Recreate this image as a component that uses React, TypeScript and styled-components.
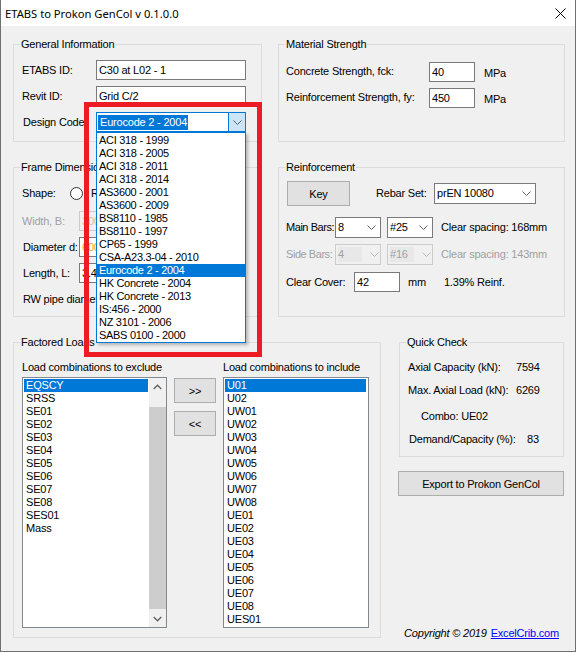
import React from 'react';
import styled, { createGlobalStyle } from 'styled-components';

const GlobalStyle = createGlobalStyle`
  html, body { margin: 0; padding: 0; background: #ffffff; }
  body { font-family: "Liberation Sans", Arial, sans-serif; font-size: 11px; letter-spacing: -0.2px; color: #000; }
  * { box-sizing: border-box; }
`;

const Window = styled.div`
  position: relative;
  width: 576px;
  height: 652px;
  border: 1px solid #707070;
  border-top: none;
  background: #f0f0f0;
  display: flex;
  flex-direction: column;
  overflow: hidden;
`;

const TitleBar = styled.div`
  height: 26px;
  flex: none;
  background: #ffffff;
  display: flex;
  align-items: center;
  justify-content: space-between;
  padding: 0 9px 0 4px;
  font-family: "Noto Sans", "Open Sans", sans-serif;
  font-size: 11.2px;
  letter-spacing: 0;
`;

const CloseIcon = () => (
  <svg width="11" height="11" viewBox="0 0 11 11">
    <path d="M0.5 0.5 L10.5 10.5 M10.5 0.5 L0.5 10.5" stroke="#000" strokeWidth="1" fill="none" />
  </svg>
);

const Body = styled.div`
  flex: 1;
  padding: 18px 0 0 12px;
  display: flex;
  flex-direction: column;
`;

const Row = styled.div<{ $cols: string; $gap: number; $mt?: number }>`
  display: grid;
  grid-template-columns: ${p => p.$cols};
  column-gap: ${p => p.$gap}px;
  margin-top: ${p => p.$mt ?? 0}px;
  align-items: start;
`;

const Group = styled.div<{ $h: number; $pt: number; $pl: number; $ml?: number }>`
  position: relative;
  height: ${p => p.$h}px;
  border: 1px solid #dcdcdc;
  padding: ${p => p.$pt}px 0 0 ${p => p.$pl}px;
  margin-left: ${p => p.$ml ?? 0}px;
`;

const Legend = styled.span`
  position: absolute;
  top: -7px;
  left: 6px;
  padding: 0 1px;
  line-height: 13px;
  background: #f0f0f0;
  white-space: nowrap;
`;

const FieldRow = styled.div<{ $h?: number; $mt?: number; $pl?: number }>`
  display: flex;
  align-items: center;
  height: ${p => p.$h ?? 20}px;
  margin-top: ${p => p.$mt ?? 0}px;
  padding-left: ${p => p.$pl ?? 0}px;
  white-space: nowrap;
`;

const Label = styled.span<{ $w?: number; $disabled?: boolean; $ml?: number; $up?: number; $down?: number; $tight?: boolean }>`
  flex: none;
  width: ${p => (p.$w ? `${p.$w}px` : 'auto')};
  margin-left: ${p => p.$ml ?? 0}px;
  margin-bottom: ${p => (p.$up ?? 0) * 2}px;
  margin-top: ${p => (p.$down ?? 0) * 2}px;
  color: ${p => (p.$disabled ? '#a0a0a0' : '#000000')};
  letter-spacing: ${p => (p.$tight ? '-0.45px' : 'inherit')};
  line-height: 13px;
  white-space: nowrap;
`;

const TextBox = styled.input<{ $w: number; $disabled?: boolean; $color?: string }>`
  flex: none;
  width: ${p => p.$w}px;
  height: 20px;
  margin: 0;
  padding: 0 0 0 2px;
  border: 1px solid ${p => (p.$disabled ? '#cccccc' : '#7a7a7a')};
  background: ${p => (p.$disabled ? '#f0f0f0' : '#ffffff')};
  color: ${p => p.$color ?? '#000000'};
  font: inherit;
  letter-spacing: inherit;
  outline: none;
`;

const Chevron = ({ color = '#606060' }: { color?: string }) => (
  <svg width="9" height="5" viewBox="0 0 9 5">
    <path d="M0.5 0.5 L4.5 4.5 L8.5 0.5" stroke={color} strokeWidth="1" fill="none" />
  </svg>
);

const Combo = styled.div<{ $w: number; $h?: number; $disabled?: boolean; $ml?: number }>`
  flex: none;
  width: ${p => p.$w}px;
  height: ${p => p.$h ?? 21}px;
  margin-left: ${p => p.$ml ?? 0}px;
  border: 1px solid ${p => (p.$disabled ? '#cccccc' : '#7a7a7a')};
  background: ${p => (p.$disabled ? '#f0f0f0' : '#ffffff')};
  display: flex;
  align-items: center;
  padding-left: 2px;
  color: ${p => (p.$disabled ? '#a0a0a0' : '#000000')};
`;

const ComboText = styled.span<{ $disabled?: boolean }>`
  flex: 1;
  line-height: 15px;
  ${p => (p.$disabled ? 'background: #e8e8e8; flex: none; width: 24px; margin-right: 4px;' : '')}
`;

const ComboArrow = styled.span`
  flex: none;
  width: 17px;
  display: flex;
  justify-content: center;
  align-items: center;
`;

const FocusCombo = styled.div`
  position: relative;
  flex: none;
  width: 150px;
  height: 20px;
  margin-left: -1px;
  border: 1px solid #0078d7;
  background: #ffffff;
  display: flex;
  align-items: center;
  padding-left: 1px;
`;

const Selected = styled.span`
  flex: none;
  background: #0078d7;
  color: #ffffff;
  line-height: 15px;
  padding: 0 1px 0 2px;
`;

const FocusArrow = styled.span`
  margin-left: auto;
  width: 17px;
  height: 100%;
  background: #cce4f7;
  border-left: 1px solid #0078d7;
  display: flex;
  align-items: center;
  justify-content: center;
`;

const Popup = styled.div`
  position: absolute;
  top: 19px;
  left: -1px;
  width: 150px;
  z-index: 10;
  background: #ffffff;
  border: 1px solid #0078d7;
  padding-top: 1px;
  box-shadow: 2px 2px 3px rgba(0, 0, 0, 0.25);
  display: flex;
  flex-direction: column;
`;

const PopupItem = styled.div<{ $sel?: boolean }>`
  height: 13px;
  line-height: 13px;
  padding-left: 2px;
  letter-spacing: -0.3px;
  background: ${p => (p.$sel ? '#0078d7' : 'transparent')};
  color: ${p => (p.$sel ? '#ffffff' : '#000000')};
  white-space: nowrap;
`;

const Annotation = styled.div`
  position: absolute;
  left: 83px;
  top: 102px;
  width: 178px;
  height: 255px;
  border: 5px solid #ed1c24;
  z-index: 20;
  pointer-events: none;
`;

const Radio = styled.span<{ $ml?: number }>`
  flex: none;
  width: 13px;
  height: 13px;
  margin-left: ${p => p.$ml ?? 0}px;
  border-radius: 50%;
  border: 1px solid #333333;
  background: #ffffff;
`;

const Button = styled.div<{ $w?: number; $h?: number; $ml?: number }>`
  flex: none;
  width: ${p => (p.$w ? `${p.$w}px` : '100%')};
  height: ${p => p.$h ?? 25}px;
  margin-left: ${p => p.$ml ?? 0}px;
  background: #e1e1e1;
  border: 1px solid #adadad;
  display: flex;
  align-items: center;
  justify-content: center;
  white-space: nowrap;
`;

const LoadsGrid = styled.div`
  display: grid;
  grid-template-columns: 145px 42px 146px;
  grid-template-rows: 13px 251px;
  column-gap: 7px;
  row-gap: 3px;
`;

const ListBox = styled.div<{ $pr?: number }>`
  height: 251px;
  border: 1px solid #828790;
  background: #ffffff;
  display: flex;
  padding: 1px ${p => p.$pr ?? 0}px 0 1px;
`;

const ListItems = styled.div<{ $mr?: number }>`
  flex: 1;
  display: flex;
  flex-direction: column;
  margin-right: ${p => p.$mr ?? 0}px;
`;

const ListItem = styled.div<{ $sel?: boolean }>`
  height: 13px;
  line-height: 13px;
  padding-left: 2px;
  background: ${p => (p.$sel ? '#0078d7' : 'transparent')};
  color: ${p => (p.$sel ? '#ffffff' : '#000000')};
`;

const ScrollBar = styled.div`
  flex: none;
  width: 17px;
  margin-top: -1px;
  height: 249px;
  background: #f0f0f0;
  display: flex;
  flex-direction: column;
`;

const ScrollArrow = styled.div`
  flex: none;
  height: 17px;
  display: flex;
  align-items: center;
  justify-content: center;
`;

const ScrollThumb = styled.div<{ $mt: number; $h: number }>`
  flex: none;
  margin-top: ${p => p.$mt}px;
  height: ${p => p.$h}px;
  margin-bottom: 1px;
  background: #cdcdcd;
`;

const ButtonColumn = styled.div`
  display: flex;
  flex-direction: column;
  gap: 8px;
  padding-top: 1px;
`;

const RightColumn = styled.div`
  height: 298px;
  display: flex;
  flex-direction: column;
`;

const CheckRow = styled.div<{ $mt?: number; $pl?: number }>`
  display: flex;
  line-height: 13px;
  margin-top: ${p => p.$mt ?? 0}px;
  padding-left: ${p => p.$pl ?? 0}px;
  white-space: nowrap;
`;

const ExportButton = styled(Button)`
  margin-top: 14px;
`;

const Copyright = styled.div`
  margin-top: auto;
  display: flex;
  justify-content: flex-end;
  padding-right: 5px;
  line-height: 13px;
  white-space: nowrap;
  gap: 4px;
`;

const Italic = styled.span`
  font-style: italic;
`;

const Link = styled.a`
  color: #0000ff;
  text-decoration: underline;
`;

const codes = [
  'ACI 318 - 1999', 'ACI 318 - 2005', 'ACI 318 - 2011', 'ACI 318 - 2014',
  'AS3600 - 2001', 'AS3600 - 2009', 'BS8110 - 1985', 'BS8110 - 1997',
  'CP65 - 1999', 'CSA-A23.3-04 - 2010', 'Eurocode 2 - 2004', 'HK Concrete - 2004',
  'HK Concrete - 2013', 'IS:456 - 2000', 'NZ 3101 - 2006', 'SABS 0100 - 2000',
];

const exclude = ['EQSCY', 'SRSS', 'SE01', 'SE02', 'SE03', 'SE04', 'SE05', 'SE06', 'SE07', 'SE08', 'SES01', 'Mass'];
const include = [
  'U01', 'U02', 'UW01', 'UW02', 'UW03', 'UW04', 'UW05', 'UW06', 'UW07', 'UW08',
  'UE01', 'UE02', 'UE03', 'UE04', 'UE05', 'UE06', 'UE07', 'UE08', 'UES01',
];

const UpArrow = () => (
  <svg width="9" height="6" viewBox="0 0 9 6">
    <path d="M0.7 5 L4.5 1.2 L8.3 5" stroke="#606060" strokeWidth="1.3" fill="none" />
  </svg>
);
const DownArrow = () => (
  <svg width="9" height="6" viewBox="0 0 9 6">
    <path d="M0.7 1 L4.5 4.8 L8.3 1" stroke="#606060" strokeWidth="1.3" fill="none" />
  </svg>
);

export default function App() {
  return (
    <>
      <GlobalStyle />
      <Window>
        <TitleBar>
          <span>ETABS to Prokon GenCol v 0.1.0.0</span>
          <CloseIcon />
        </TitleBar>
        <Body>
          <Row $cols="249px 287px" $gap={16}>
            <Group $h={98} $pt={15} $pl={8}>
              <Legend>General Information</Legend>
              <FieldRow>
                <Label $w={74}>ETABS ID:</Label>
                <TextBox $w={150} readOnly value="C30 at L02 - 1" />
              </FieldRow>
              <FieldRow $mt={6}>
                <Label $w={74}>Revit ID:</Label>
                <TextBox $w={150} readOnly value="Grid C/2" />
              </FieldRow>
              <FieldRow $mt={6}>
                <Label $w={74} $ml={1}>Design Code</Label>
                <FocusCombo>
                  <Selected>Eurocode 2 - 2004</Selected>
                  <FocusArrow><Chevron /></FocusArrow>
                  <Popup>
                    {codes.map(c => (
                      <PopupItem key={c} $sel={c === 'Eurocode 2 - 2004'}>{c}</PopupItem>
                    ))}
                  </Popup>
                </FocusCombo>
              </FieldRow>
            </Group>
            <Group $h={98} $pt={17} $pl={7}>
              <Legend>Material Strength</Legend>
              <FieldRow>
                <Label $w={143} $up={1}>Concrete Strength, fck:</Label>
                <TextBox $w={46} readOnly value="40" />
                <Label $ml={9} $down={1}>MPa</Label>
              </FieldRow>
              <FieldRow $mt={6}>
                <Label $w={143} $up={1}>Reinforcement Strength, fy:</Label>
                <TextBox $w={46} readOnly value="450" />
                <Label $ml={9} $down={1}>MPa</Label>
              </FieldRow>
            </Group>
          </Row>

          <Row $cols="249px 287px" $gap={16} $mt={25}>
            <Group $h={150} $pt={15} $pl={8}>
              <Legend>Frame Dimensions</Legend>
              <FieldRow>
                <Label $w={48}>Shape:</Label>
                <Radio />
                <Label $ml={8}>Rectangular</Label>
                <Radio $ml={14} />
                <Label $ml={8}>Circular</Label>
              </FieldRow>
              <FieldRow $mt={8}>
                <Label $w={57} $disabled>Width, B:</Label>
                <TextBox $w={80} $disabled readOnly value="300" $color="#d9c3a0" />
              </FieldRow>
              <FieldRow $mt={6}>
                <Label $w={56} $ml={1}>Diameter d:</Label>
                <TextBox $w={80} readOnly value="600" $color="#f0a040" />
              </FieldRow>
              <FieldRow $mt={6}>
                <Label $w={56} $ml={1}>Length, L:</Label>
                <TextBox $w={80} readOnly value="3.4" />
              </FieldRow>
              <FieldRow $mt={6}>
                <Label $ml={1}>RW pipe diameter:</Label>
              </FieldRow>
            </Group>
            <Group $h={150} $pt={13} $pl={7}>
              <Legend>Reinforcement</Legend>
              <FieldRow $h={25}>
                <Button $w={63} $ml={1}>Key</Button>
                <Label $w={58} $ml={26}>Rebar Set:</Label>
                <Combo $w={102}>
                  <ComboText>prEN 10080</ComboText>
                  <ComboArrow><Chevron /></ComboArrow>
                </Combo>
              </FieldRow>
              <FieldRow $h={21} $mt={11}>
                <Label $w={49} $tight>Main Bars:</Label>
                <Combo $w={46}>
                  <ComboText>8</ComboText>
                  <ComboArrow><Chevron /></ComboArrow>
                </Combo>
                <Combo $w={46} $ml={6}>
                  <ComboText>#25</ComboText>
                  <ComboArrow><Chevron /></ComboArrow>
                </Combo>
                <Label $ml={8}>Clear spacing: 168mm</Label>
              </FieldRow>
              <FieldRow $h={21} $mt={6}>
                <Label $w={49} $disabled $tight>Side Bars:</Label>
                <Combo $w={46} $disabled>
                  <ComboText $disabled>4</ComboText>
                  <ComboArrow><Chevron color="#bcbcbc" /></ComboArrow>
                </Combo>
                <Combo $w={46} $disabled $ml={6}>
                  <ComboText $disabled>#16</ComboText>
                  <ComboArrow><Chevron color="#bcbcbc" /></ComboArrow>
                </Combo>
                <Label $ml={8} $disabled>Clear spacing: 143mm</Label>
              </FieldRow>
              <FieldRow $mt={7}>
                <Label $w={68}>Clear Cover:</Label>
                <TextBox $w={46} readOnly value="42" />
                <Label $ml={8}>mm</Label>
                <Label $ml={18}>1.39% Reinf.</Label>
              </FieldRow>
            </Group>
          </Row>

          <Row $cols="368px 166px" $gap={17} $mt={25}>
            <Group $h={296} $pt={18} $pl={8}>
              <Legend>Factored Loads</Legend>
              <LoadsGrid>
                <Label>Load combinations to exclude</Label>
                <span />
                <Label>Load combinations to include</Label>
                <ListBox>
                  <ListItems $mr={1}>
                    {exclude.map(x => (
                      <ListItem key={x} $sel={x === 'EQSCY'}>{x}</ListItem>
                    ))}
                  </ListItems>
                  <ScrollBar>
                    <ScrollArrow><UpArrow /></ScrollArrow>
                    <ScrollThumb $mt={12} $h={202} />
                    <ScrollArrow><DownArrow /></ScrollArrow>
                  </ScrollBar>
                </ListBox>
                <ButtonColumn>
                  <Button $w={42}>&gt;&gt;</Button>
                  <Button $w={42}>&lt;&lt;</Button>
                </ButtonColumn>
                <ListBox $pr={2}>
                  <ListItems>
                    {include.map(x => (
                      <ListItem key={x} $sel={x === 'U01'}>{x}</ListItem>
                    ))}
                  </ListItems>
                </ListBox>
              </LoadsGrid>
            </Group>
            <RightColumn>
              <Group $h={115} $pt={18} $pl={8} $ml={1}>
                <Legend>Quick Check</Legend>
                <CheckRow>
                  <Label $w={108}>Axial Capacity (kN):</Label>
                  <span>7594</span>
                </CheckRow>
                <CheckRow $mt={10}>
                  <Label $w={108}>Max. Axial Load (kN):</Label>
                  <span>6269</span>
                </CheckRow>
                <CheckRow $mt={13} $pl={13}>
                  <span>Combo: UE02</span>
                </CheckRow>
                <CheckRow $mt={10} $pl={1}>
                  <Label $w={118}>Demand/Capacity (%):</Label>
                  <span>83</span>
                </CheckRow>
              </Group>
              <ExportButton>Export to Prokon GenCol</ExportButton>
              <Copyright>
                <Italic>Copyright © 2019</Italic>
                <Link href="#">ExcelCrib.com</Link>
              </Copyright>
            </RightColumn>
          </Row>
        </Body>
        <Annotation />
      </Window>
    </>
  );
}
